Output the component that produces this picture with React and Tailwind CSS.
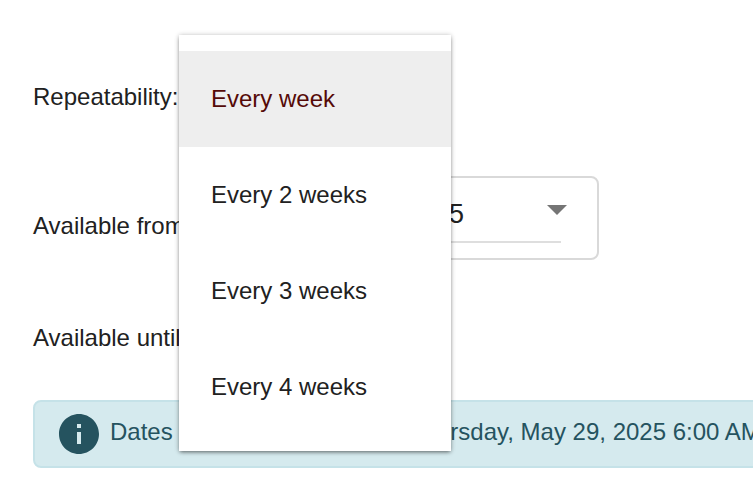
import { useState } from "react";

const options = [
  { value: 1, label: "Every week" },
  { value: 2, label: "Every 2 weeks" },
  { value: 3, label: "Every 3 weeks" },
  { value: 4, label: "Every 4 weeks" },
];

function InfoIcon() {
  return (
    <svg viewBox="0 0 24 24" className="size-12 shrink-0 fill-[#25535f]">
      <path d="M12 2C6.48 2 2 6.48 2 12s4.48 10 10 10 10-4.48 10-10S17.52 2 12 2zm1 15h-2v-6h2v6zm0-8h-2V7h2v2z" />
    </svg>
  );
}

function DateField() {
  return (
    <div className="flex h-[84px] w-[400px] rounded-lg border-2 border-[#d9d9d9] pr-9">
      <div className="relative flex h-[65px] flex-1 justify-end border-b-2 border-[#dedede]">
        <span className="mr-[97px] pt-5 text-[27px] leading-8 text-[#212121]">
          5/29/2025
        </span>
        <svg
          viewBox="0 0 20 10"
          className="absolute top-[27px] -right-1.5 h-2.5 w-5 fill-[#757575]"
        >
          <path d="M0 0h20L10 10z" />
        </svg>
      </div>
    </div>
  );
}

export default function App() {
  const [selected, setSelected] = useState(1);

  return (
    <main className="relative h-[485px] w-[753px] overflow-hidden bg-white font-['Liberation_Sans',Arial,sans-serif] text-2xl leading-8 text-[#212121]">
      <div className="flex flex-col pl-[33px] whitespace-nowrap">
        <div className="mt-[81px] h-8">Repeatability:</div>

        <div className="mt-[63px] flex h-[84px]">
          <div className="w-[166px] shrink-0 pt-[34px]">Available from:</div>
          <DateField />
        </div>

        <div className="mt-[62px] h-8">Available until:</div>

        <div className="mt-[46px] flex h-[68px] w-[1000px] items-center rounded-lg border-2 border-[#c5e2e8] bg-[#d5eaee] pl-5 text-[#25535f]">
          <InfoIcon />
          <div className="-mt-1 ml-[7px] flex">
            <span className="w-[299px]">Dates repeat until</span>
            <span>Thursday, May 29, 2025 6:00 AM</span>
          </div>
        </div>
      </div>

      <ul
        role="listbox"
        className="absolute top-[35px] left-[179px] w-[272px] bg-white py-4 shadow-[0_2px_4px_-1px_rgba(0,0,0,0.5),0_0_5px_rgba(0,0,0,0.2)]"
      >
        {options.map((option) => (
          <li
            key={option.value}
            role="option"
            aria-selected={option.value === selected}
            onClick={() => setSelected(option.value)}
            className={`flex h-24 items-center px-8 ${
              option.value === selected ? "bg-[#eeeeee] text-[#550a08]" : ""
            }`}
          >
            {option.label}
          </li>
        ))}
      </ul>
    </main>
  );
}
